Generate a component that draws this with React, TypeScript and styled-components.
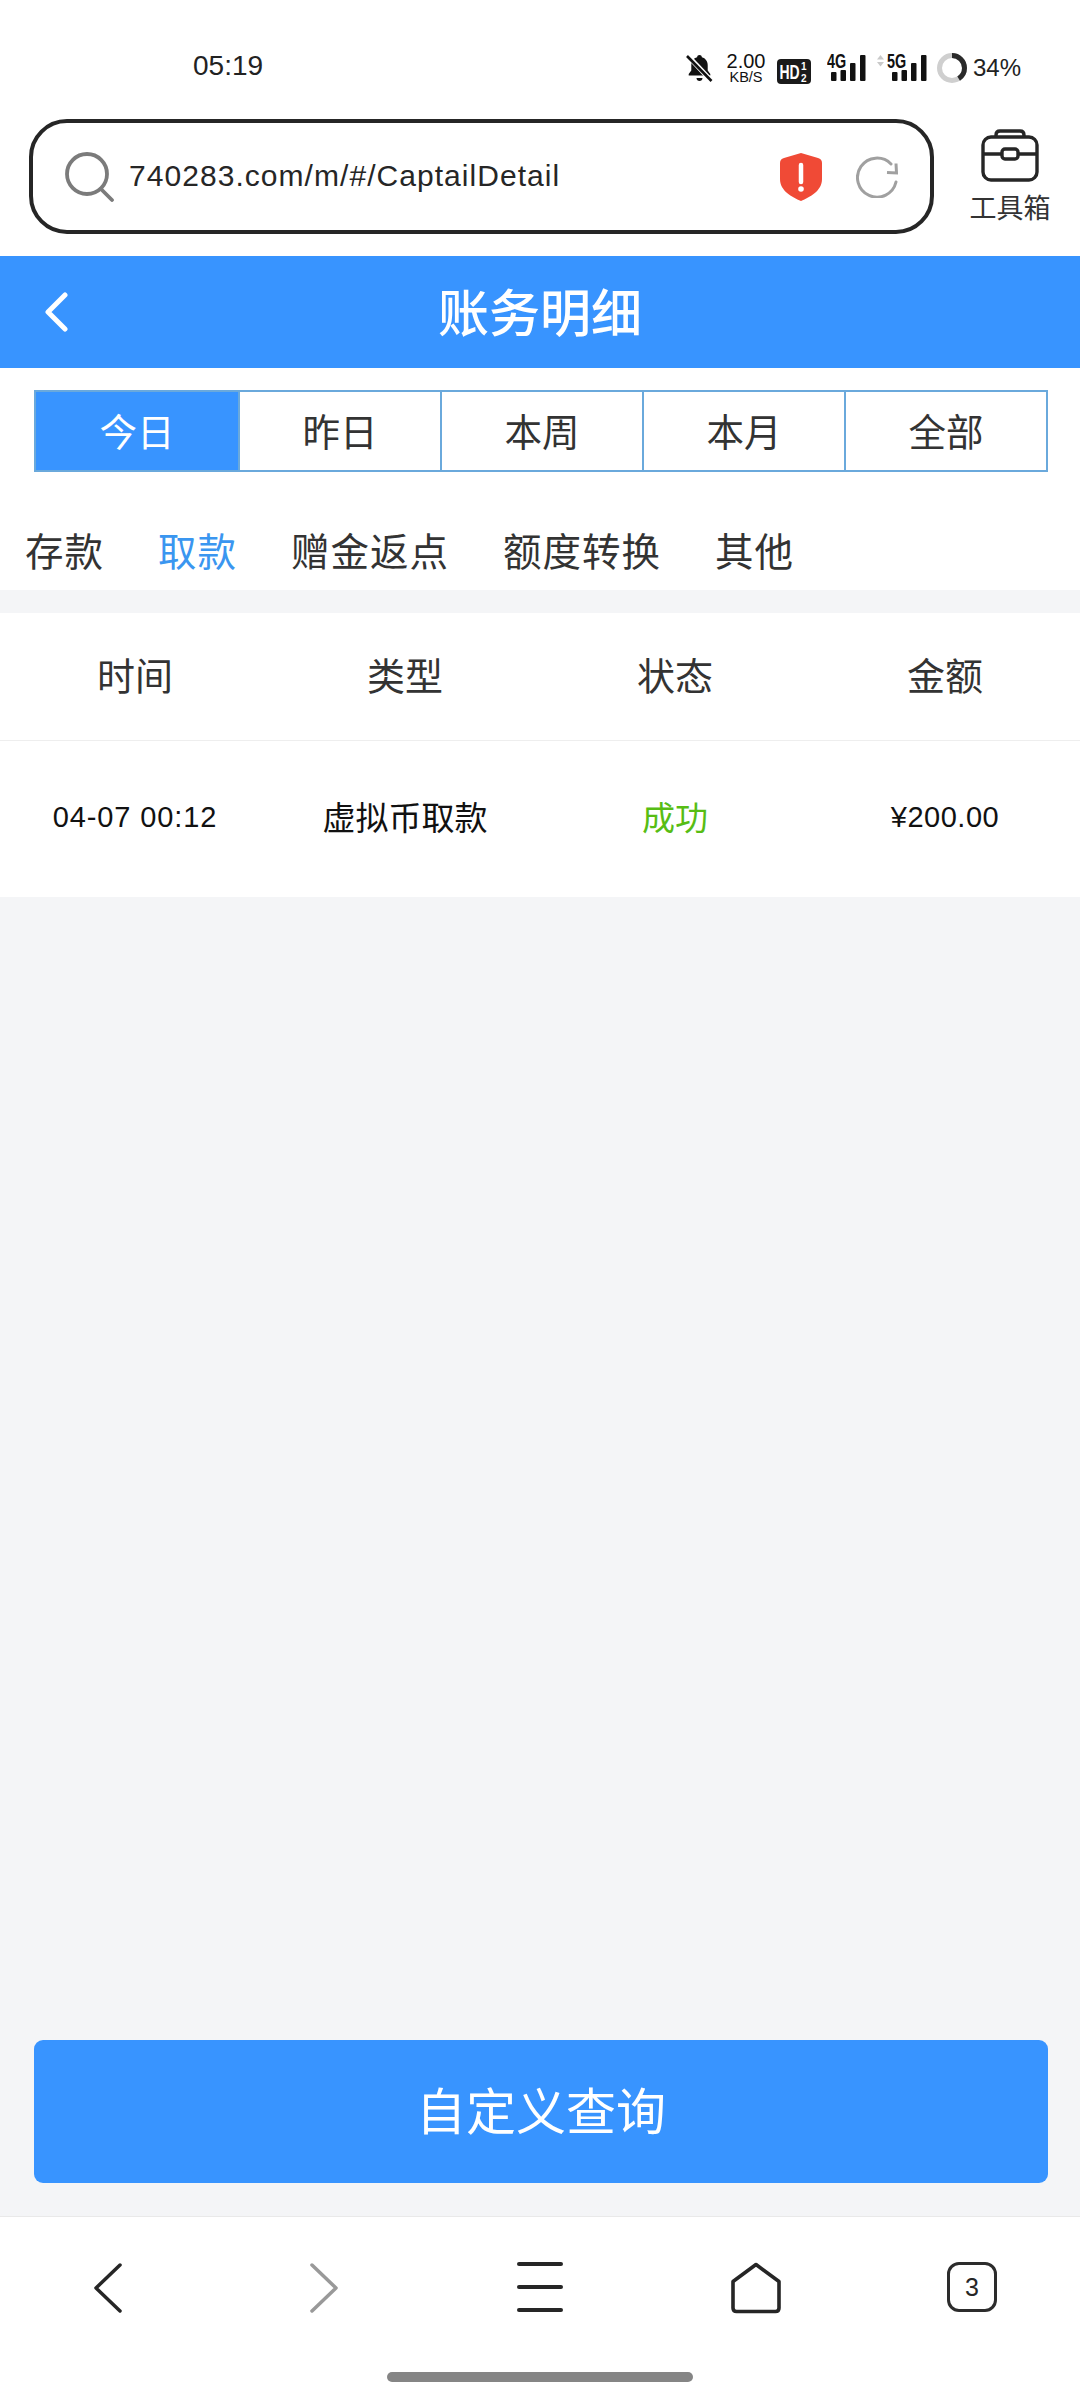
import React from "react";
import styled, { createGlobalStyle } from "styled-components";

const BLUE = "#3894ff";
const PERIODS = ["今日", "昨日", "本周", "本月", "全部"];
const FILTERS = ["存款", "取款", "赠金返点", "额度转换", "其他"];
const COLUMNS = ["时间", "类型", "状态", "金额"];

const GlobalStyle = createGlobalStyle`
  html, body {
    margin: 0;
    padding: 0;
    background: #fff;
    font-family: "Liberation Sans", "Noto Sans CJK SC", sans-serif;
  }
  * { box-sizing: border-box; }
`;

const Signal: React.FC<{ label: string; arrows?: boolean }> = ({ label, arrows }) => {
  const left = arrows ? 15 : 4;
  return (
    <SignalIcon $wide={!!arrows} viewBox={`0 -4 ${arrows ? 50 : 40} 32`}>
      {arrows && (
        <g fill="#c9c9c9">
          <polygon points="3.5,1 7,5.5 0,5.5" />
          <polygon points="0,8 7,8 3.5,12.5" />
        </g>
      )}
      <text transform={`translate(${arrows ? 10 : 0} 14) scale(0.72 1)`} fontSize="20" fontWeight="700" fill="#111">
        {label}
      </text>
      <g fill="#111">
        <rect x={left} y="18" width="5.5" height="9" rx="1" />
        <rect x={left + 9.5} y="16" width="5.5" height="11" rx="1" />
        <rect x={left + 19} y="9" width="5.5" height="18" rx="1" />
        <rect x={left + 29} y="1" width="5.5" height="26" rx="1" />
      </g>
    </SignalIcon>
  );
};

const App: React.FC = () => {
  return (
    <Page>
      <GlobalStyle />
      <StatusBar>
        <Clock>05:19</Clock>
        <StatusIcons>
          <svg width="27" height="28" viewBox="0 0 27 28">
            <path d="M13.5 1c1.4 0 2.2.9 2.4 2.2 3.6 1 5.8 4 5.8 8v5.3l2.6 3.6v1.4H2.7v-1.4l2.6-3.6v-5.3c0-4 2.2-7 5.8-8C11.3 1.900 12.100 1 13.500 1z" fill="#111" />
            <path d="M10.500 24h6c0 1.800-1.300 3-3 3s-3-1.200-3-3z" fill="#111" />
            <path d="M1.500 1.500 25.500 27" stroke="#fff" strokeWidth="5" />
            <path d="M1 2 25.500 27" stroke="#111" strokeWidth="2.600" />
          </svg>
          <Speed>
            <SpeedValue>2.00</SpeedValue>
            <SpeedUnit>KB/S</SpeedUnit>
          </Speed>
          <HdBadge viewBox="0 0 34 25">
            <rect width="34" height="25" rx="4" fill="#1a1a1a" />
            <text transform="translate(2.500 19.500) scale(0.7 1)" fontSize="20" fontWeight="700" fill="#fff">HD</text>
            <text x="24" y="10.500" fontSize="10" fontWeight="700" fill="#fff">1</text>
            <text x="24" y="22.500" fontSize="10" fontWeight="700" fill="#fff">2</text>
          </HdBadge>
          <Signal label="4G" />
          <Signal label="5G" arrows />
          <BatteryRing viewBox="0 0 30 30">
            <circle cx="15" cy="15" r="12.500" fill="none" stroke="#cfcfcf" strokeWidth="5" />
            <circle cx="15" cy="15" r="12.500" fill="none" stroke="#2a2a2a" strokeWidth="5" strokeDasharray="32 79" transform="rotate(-90 15 15)" />
          </BatteryRing>
          <BatteryText>34%</BatteryText>
        </StatusIcons>
      </StatusBar>

      <BrowserBar>
        <AddressBox>
          <svg width="50" height="50" viewBox="0 0 50 50">
            <circle cx="22" cy="22" r="20" fill="none" stroke="#7b7b7b" strokeWidth="3.800" />
            <path d="M36 37 47 48" stroke="#7b7b7b" strokeWidth="3.800" strokeLinecap="round" />
          </svg>
          <Url>740283.com/m/#/CaptailDetail</Url>
          <svg width="42" height="48" viewBox="0 0 42 48">
            <path d="M21 0 38 5Q42 6 42 10V26C42 38 30 44 21 48 12 44 0 38 0 26V10Q0 6 4 5Z" fill="#f04a36" />
            <path d="M21 12V29" stroke="#fff" strokeWidth="4.500" strokeLinecap="round" />
            <circle cx="21" cy="36" r="2.800" fill="#fff" />
          </svg>
          <RefreshIcon width="42" height="42" viewBox="0 0 42 42">
            <path d="M40 26A19.500 19.500 0 1 1 35 8" fill="none" stroke="#a0a0a0" strokeWidth="3" strokeLinecap="round" />
            <path d="M31 16.500 40.500 17 40 7.500" fill="none" stroke="#a0a0a0" strokeWidth="3" />
          </RefreshIcon>
        </AddressBox>
        <Toolbox>
          <svg width="58" height="53" viewBox="0 0 58 53">
            <path d="M15 8V6Q15 2 19 2H39Q43 2 43 6V8" fill="none" stroke="#262626" strokeWidth="3.400" />
            <rect x="2" y="8" width="54" height="43" rx="8" fill="none" stroke="#262626" strokeWidth="3.400" />
            <path d="M2 25H21M37 25H56" stroke="#262626" strokeWidth="3.400" />
            <rect x="21" y="20" width="16" height="10" rx="3" fill="none" stroke="#262626" strokeWidth="3.400" />
          </svg>
          <ToolboxLabel>工具箱</ToolboxLabel>
        </Toolbox>
      </BrowserBar>

      <Header>
        <svg width="24" height="40" viewBox="0 0 24 40">
          <path d="M21 3 4 20 21 37" fill="none" stroke="#fff" strokeWidth="5" strokeLinecap="round" strokeLinejoin="round" />
        </svg>
        <Title>账务明细</Title>
      </Header>

      <PeriodTabs>
        {PERIODS.map((p, i) => (
          <PeriodTab key={p} $active={i === 0}>{p}</PeriodTab>
        ))}
      </PeriodTabs>

      <FilterTabs>
        {FILTERS.map((f, i) => (
          <FilterTab key={f} $active={i === 1}>{f}</FilterTab>
        ))}
      </FilterTabs>

      <Main>
        <Table>
          <HeadRow>
            {COLUMNS.map((c) => (
              <HeadCell key={c}>{c}</HeadCell>
            ))}
          </HeadRow>
          <BodyRow>
            <BodyCell $spacing={0.9}>04-07 00:12</BodyCell>
            <BodyCell $cjk>虚拟币取款</BodyCell>
            <BodyCell $cjk $color="#57bd14">成功</BodyCell>
            <BodyCell $spacing={0.5}>¥200.00</BodyCell>
          </BodyRow>
        </Table>
        <QueryButton>自定义查询</QueryButton>
      </Main>

      <BottomNav>
        <NavIcons>
          <NavSlot>
            <svg width="30" height="52" viewBox="0 0 30 52">
              <path d="M27 3 3 26 27 49" fill="none" stroke="#262626" strokeWidth="3.500" strokeLinecap="round" strokeLinejoin="round" />
            </svg>
          </NavSlot>
          <NavSlot>
            <svg width="30" height="52" viewBox="0 0 30 52">
              <path d="M3 3 27 26 3 49" fill="none" stroke="#999" strokeWidth="3.500" strokeLinecap="round" strokeLinejoin="round" />
            </svg>
          </NavSlot>
          <NavSlot>
            <MenuLines>
              <i />
              <i />
              <i />
            </MenuLines>
          </NavSlot>
          <NavSlot>
            <svg width="52" height="52" viewBox="0 0 52 52">
              <path d="M26 2.500 49 19.500V46Q49 49.500 45.500 49.500H6.500Q3 49.500 3 46V19.500Z" fill="none" stroke="#262626" strokeWidth="3.600" strokeLinejoin="round" />
            </svg>
          </NavSlot>
          <NavSlot>
            <TabCount>3</TabCount>
          </NavSlot>
        </NavIcons>
        <HomeBar />
      </BottomNav>
    </Page>
  );
};

export default App;

const Page = styled.div`
  width: 1080px;
  height: 2400px;
  display: flex;
  flex-direction: column;
  background: #fff;
  overflow: hidden;
`;

const StatusBar = styled.div`
  height: 119px;
  padding: 53px 63px 0 193px;
  display: flex;
  justify-content: space-between;
  align-items: flex-start;
`;

const Clock = styled.span`
  margin-top: -2px;
  font-size: 28px;
  line-height: 30px;
  color: #222;
`;

const StatusIcons = styled.div`
  display: flex;
  align-items: center;
  height: 30px;
  gap: 12px;
`;

const Speed = styled.div`
  width: 42px;
  display: flex;
  flex-direction: column;
  align-items: center;
`;

const SpeedValue = styled.span`
  font-size: 20px;
  line-height: 19px;
  font-weight: 500;
  color: #111;
`;

const SpeedUnit = styled.span`
  font-size: 14.500px;
  line-height: 13px;
  color: #111;
`;

const HdBadge = styled.svg`
  width: 34px;
  height: 25px;
  margin-left: -2px;
  margin-top: 6px;
`;

const SignalIcon = styled.svg<{ $wide: boolean }>`
  width: ${(p) => (p.$wide ? 50 : 40)}px;
  height: 32px;
  margin-left: ${(p) => (p.$wide ? -2 : 4)}px;
  margin-bottom: 4px;
`;

const BatteryRing = styled.svg`
  width: 30px;
  height: 30px;
  margin-left: -2px;
`;

const BatteryText = styled.span`
  width: 44px;
  margin-left: -6px;
  font-size: 24px;
  color: #222;
`;

const BrowserBar = styled.div`
  height: 137px;
  padding-left: 29px;
  display: flex;
  align-items: flex-start;
`;

const AddressBox = styled.div`
  width: 905px;
  height: 115px;
  padding: 0 32px 0 32px;
  display: flex;
  align-items: center;
  border: 4px solid #262626;
  border-radius: 38px;
`;

const Url = styled.span`
  flex: 1;
  margin-left: 14px;
  margin-top: -2px;
  font-size: 30px;
  letter-spacing: 1.050px;
  color: #262626;
`;

const RefreshIcon = styled.svg`
  margin-left: 34px;
`;

const Toolbox = styled.div`
  margin-left: 36px;
  margin-top: 10px;
  width: 80px;
  display: flex;
  flex-direction: column;
  align-items: center;
  gap: 12px;
`;

const ToolboxLabel = styled.span`
  font-size: 27px;
  line-height: 30px;
  white-space: nowrap;
  color: #333;
`;

const Header = styled.div`
  position: relative;
  height: 112px;
  background: ${BLUE};
  display: flex;
  align-items: center;
  justify-content: center;

  svg {
    position: absolute;
    left: 44px;
    top: 36px;
  }
`;

const Title = styled.h1`
  margin: 0 0 5px;
  font-size: 51px;
  font-weight: 500;
  color: #fff;
`;

const PeriodTabs = styled.div`
  margin: 22px 32px 0 34px;
  height: 82px;
  display: grid;
  grid-template-columns: repeat(5, 1fr);
  border: 2px solid #6aa9dc;
`;

const PeriodTab = styled.div<{ $active: boolean }>`
  display: flex;
  align-items: center;
  justify-content: center;
  padding-bottom: 4px;
  font-size: 37.500px;
  color: ${(p) => (p.$active ? "#fff" : "#333")};
  background: ${(p) => (p.$active ? BLUE : "#fff")};
  & + & {
    border-left: 2px solid #6aa9dc;
  }
`;

const FilterTabs = styled.div`
  height: 118px;
  padding: 56px 0 0 25px;
  display: flex;
  gap: 54px;
`;

const FilterTab = styled.span<{ $active: boolean }>`
  font-size: 38.500px;
  letter-spacing: 1px;
  line-height: 50px;
  color: ${(p) => (p.$active ? "#3a96f0" : "#333")};
`;

const Main = styled.main`
  flex: 1;
  padding-top: 23px;
  display: flex;
  flex-direction: column;
  background: #f4f5f7;
`;

const Table = styled.section`
  flex: 1;
`;

const HeadRow = styled.div`
  height: 128px;
  display: grid;
  grid-template-columns: repeat(4, 270px);
  align-items: center;
  background: #fff;
  border-bottom: 1px solid #eeeeee;
`;

const HeadCell = styled.div`
  margin-bottom: 6px;
  text-align: center;
  font-size: 38px;
  color: #333;
`;

const BodyRow = styled.div`
  height: 156px;
  display: grid;
  grid-template-columns: repeat(4, 270px);
  align-items: center;
  background: #fff;
`;

const BodyCell = styled.div<{ $cjk?: boolean; $color?: string; $spacing?: number }>`
  margin-bottom: ${(p) => (p.$cjk ? 6 : 3)}px;
  text-align: center;
  font-size: ${(p) => (p.$cjk ? 33 : 29)}px;
  letter-spacing: ${(p) => p.$spacing || 0}px;
  color: ${(p) => p.$color || "#111"};
`;

const QueryButton = styled.button`
  margin: 0 32px 33px 34px;
  height: 143px;
  padding-bottom: 8px;
  border: none;
  border-radius: 9px;
  background: ${BLUE};
  color: #fff;
  font-family: inherit;
  font-size: 50px;
`;

const BottomNav = styled.nav`
  height: 184px;
  border-top: 1px solid #e9e9e9;
  display: flex;
  flex-direction: column;
  align-items: center;
`;

const NavIcons = styled.div`
  width: 100%;
  height: 155px;
  padding-top: 45px;
  display: grid;
  grid-template-columns: repeat(5, 216px);
  align-items: start;
`;

const NavSlot = styled.div`
  display: flex;
  justify-content: center;
`;

const MenuLines = styled.div`
  width: 46px;
  height: 50px;
  display: flex;
  flex-direction: column;
  justify-content: space-between;

  i {
    display: block;
    height: 4px;
    border-radius: 2px;
    background: #262626;
  }
`;

const TabCount = styled.div`
  width: 50px;
  height: 50px;
  display: flex;
  align-items: center;
  justify-content: center;
  border: 3.500px solid #2c2c2c;
  border-radius: 12px;
  font-size: 25px;
  color: #262626;
`;

const HomeBar = styled.div`
  width: 306px;
  height: 10px;
  border-radius: 5px;
  background: #858585;
`;
